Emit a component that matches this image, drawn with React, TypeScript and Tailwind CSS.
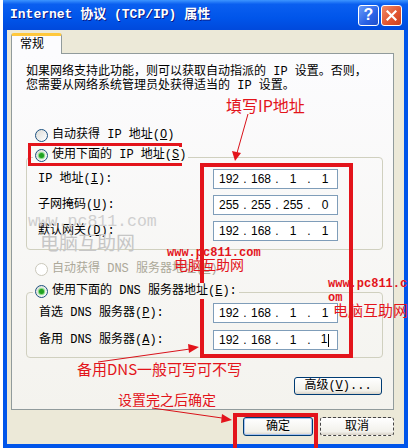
import React from "react";

const UI = "font-['Liberation_Mono','Noto_Sans_CJK_SC',monospace]";
const CJK = "font-['Noto_Sans_CJK_SC',sans-serif]";

function Radio({ checked, disabled }: { checked?: boolean; disabled?: boolean }) {
  return (
    <span
      className={
        disabled
          ? "flex h-[13px] w-[13px] shrink-0 items-center justify-center rounded-full border border-[#CAC8BB] bg-white"
          : "flex h-[13px] w-[13px] shrink-0 items-center justify-center rounded-full border border-[#1C5180] bg-[linear-gradient(135deg,#DCDCD7,#FFFFFF)]"
      }
    >
      {checked && <span className="h-[5px] w-[5px] rounded-full bg-[#21A121] shadow-[0_0_1px_1px_#7BD97A]" />}
    </span>
  );
}

function IpBox({ parts, caret }: { parts: string[]; caret?: boolean }) {
  return (
    <div className="flex h-[20px] w-[125px] items-center border border-[#7F9DB9] bg-white pl-[3px] font-['Liberation_Sans',sans-serif] text-[12px] leading-none text-black">
      {parts.map((p, i) => (
        <React.Fragment key={i}>
          {i > 0 && <span className="w-[8px] text-center">.</span>}
          <span className="w-[24px] text-center">
            {p}
            {caret && i === 3 && <span className="ml-[1px] inline-block h-[13px] w-px bg-black align-middle" />}
          </span>
        </React.Fragment>
      ))}
    </div>
  );
}

function XpButton({ children, w, variant }: { children: React.ReactNode; w: string; variant?: "default" | "dashed" }) {
  const base =
    "flex items-center justify-center rounded-[3px] bg-[linear-gradient(#FFFFFF,#F2F1EB_80%,#D8D2C7)] text-[12px] text-black";
  const border =
    variant === "dashed"
      ? "border border-dashed border-[#444]"
      : variant === "default"
      ? "border border-[#003C74] shadow-[inset_0_0_0_1px_#A9C4F0]"
      : "border border-[#003C74]";
  return <div className={`${base} ${border} ${w}`}>{children}</div>;
}

const ipRows = [
  { label: "IP 地址", key: "I", parts: ["192", "168", "1", "1"] },
  { label: "子网掩码", key: "U", parts: ["255", "255", "255", "0"] },
  { label: "默认网关", key: "D", parts: ["192", "168", "1", "1"] },
];

const dnsRows = [
  { label: "首选 DNS 服务器", key: "P", parts: ["192", "168", "1", "1"] },
  { label: "备用 DNS 服务器", key: "A", parts: ["192", "168", "1", "1"], caret: true },
];

export default function App() {
  return (
    <div className="relative h-[448px] w-[408px] overflow-hidden bg-white pl-[3px]">
      <div className="flex h-full w-[405px] flex-col">
        {/* title bar */}
        <div className="flex h-[30px] shrink-0 items-center bg-[linear-gradient(to_bottom,#3D95FF_0%,#0A5FF0_14%,#0055EA_60%,#0049DC_100%)] pl-[7px] pr-[6px]">
          <span className={`${UI} flex-1 text-[13px] font-bold text-white [text-shadow:1px_1px_#0A1883]`}>
            Internet 协议 (TCP/IP) 属性
          </span>
          <div className="flex gap-[2px]">
            <div className="flex h-[21px] w-[21px] items-center justify-center rounded-[3px] border border-white bg-[linear-gradient(135deg,#6A9CF8,#2A62E6_60%,#1F4FCB)]">
              <span className="font-['Liberation_Sans',sans-serif] text-[16px] font-bold leading-none text-white">?</span>
            </div>
            <div className="flex h-[21px] w-[21px] items-center justify-center rounded-[3px] border border-white bg-[linear-gradient(135deg,#F08A68,#E0532F_60%,#C8401F)]">
              <svg width="11" height="11" viewBox="0 0 11 11">
                <path d="M1.5 1.5 L9.5 9.5 M9.5 1.5 L1.5 9.5" stroke="white" strokeWidth="2.2" strokeLinecap="square" />
              </svg>
            </div>
          </div>
        </div>

        {/* body */}
        <div className={`${UI} flex flex-1 flex-col border-x-4 border-b-4 border-[#0055EA] bg-[#ECE9D8] pl-[4px] pt-[3px] text-[12px] text-black`}>
          <div className="relative z-10 -mb-px flex h-[21px] w-[51px] items-center rounded-t-[3px] border-x border-t-[3px] border-x-[#919B9C] border-t-[#FFC83C] bg-[#FCFCFE] pl-[8px]">
            常规
          </div>

          <div className="flex h-[357px] w-[383px] flex-col border border-[#919B9C] bg-[linear-gradient(#FCFCFE,#F4F3EE)] leading-[14px]">
            <div className="pl-[14px] pt-[11px]">
              <div>如果网络支持此功能，则可以获取自动指派的 IP 设置。否则，</div>
              <div>您需要从网络系统管理员处获得适当的 IP 设置。</div>
            </div>

            <div className="ml-[23px] mt-[34px] flex h-[16px] items-center gap-[4px]">
              <Radio />
              <span>
                自动获得 IP 地址(<u>O</u>)
              </span>
            </div>

            <div className="relative z-10 ml-[21px] mt-[4px] flex h-[16px] w-fit items-center gap-[4px] bg-[#FAFAF8] px-[2px]">
              <Radio checked />
              <span>
                使用下面的 IP 地址(<u>S</u>)
              </span>
            </div>

            <div className="-mt-[6px] ml-[14px] w-[357px] rounded-[4px] border border-[#D0D0BF] pb-[8px] pl-[11px] pt-[11px]">
              <div className="grid grid-cols-[175px_125px] items-center gap-y-[6px]">
                {ipRows.map((r) => (
                  <React.Fragment key={r.key}>
                    <span>
                      {r.label}(<u>{r.key}</u>):
                    </span>
                    <IpBox parts={r.parts} />
                  </React.Fragment>
                ))}
              </div>
            </div>

            <div className="ml-[23px] mt-[11px] flex h-[16px] items-center gap-[4px] text-[#ACA899]">
              <Radio disabled />
              <span>
                自动获得 DNS 服务器地址(<u>B</u>)
              </span>
            </div>

            <div className="relative z-10 ml-[21px] mt-[6px] flex h-[16px] w-fit items-center gap-[4px] bg-[#F7F6F2] px-[2px]">
              <Radio checked />
              <span>
                使用下面的 DNS 服务器地址(<u>E</u>):
              </span>
            </div>

            <div className="-mt-[7px] ml-[14px] w-[357px] rounded-[4px] border border-[#D0D0BF] pb-[7px] pl-[12px] pt-[10px]">
              <div className="grid grid-cols-[174px_125px] items-center gap-y-[7px]">
                {dnsRows.map((r) => (
                  <React.Fragment key={r.key}>
                    <span>
                      {r.label}(<u>{r.key}</u>):
                    </span>
                    <IpBox parts={r.parts} caret={r.caret} />
                  </React.Fragment>
                ))}
              </div>
            </div>

            <div className="mr-[11px] mt-[19px] self-end">
              <XpButton w="w-[88px] h-[18px]">
                高级(<u>V</u>)...
              </XpButton>
            </div>
          </div>

          <div className="mt-[7px] flex justify-end gap-[7px] pr-[10px]">
            <XpButton w="w-[70px] h-[19px]" variant="default">
              确定
            </XpButton>
            <XpButton w="w-[74px] h-[19px]" variant="dashed">
              取消
            </XpButton>
          </div>
        </div>
      </div>

      {/* annotations drawn over the screenshot */}
      <div className="pointer-events-none absolute inset-0">
        <span className={`${UI} absolute left-[28px] top-[214px] text-[16.5px] leading-none text-[#CFCFCF]`}>www.pc811.com</span>
        <span className={`${CJK} absolute left-[40px] top-[232px] text-[19px] leading-none text-[#C6C6C6]`}>电脑互助网</span>

        <div className="absolute left-[28px] top-[143px] h-[23px] w-[154px] border-[3px] border-[#E3141B]" />
        <div className="absolute left-[200px] top-[163px] h-[195px] w-[153px] border-4 border-[#E3141B]" />
        <div className="absolute left-[233px] top-[413px] h-[40px] w-[85px] border-4 border-[#E3141B]" />

        <span className={`${CJK} absolute left-[226px] top-[97px] text-[16px] leading-none text-[#E3141B]`}>填写IP地址</span>
        <span className={`${CJK} absolute left-[77px] top-[361px] text-[15px] leading-none text-[#E3141B]`}>备用DNS一般可写可不写</span>
        <span className={`${CJK} absolute left-[118px] top-[392px] text-[14px] leading-none text-[#E3141B]`}>设置完之后确定</span>

        <span className="absolute left-[167px] top-[247px] font-['Liberation_Mono',monospace] text-[12px] font-bold leading-none text-[#E3141B]">
          www.pc811.com
        </span>
        <span className={`${CJK} absolute left-[174px] top-[257px] text-[14px] leading-none text-[#E3141B]`}>电脑互助网</span>
        <div className="absolute left-[328px] top-[277px] font-['Liberation_Mono',monospace] text-[12px] font-bold leading-[14px] text-[#E3141B]">
          <div>www.pc811.c</div>
          <div>om</div>
        </div>
        <span className={`${CJK} absolute left-[333px] top-[302px] text-[15px] leading-none text-[#E3141B]`}>电脑互助网</span>

        <svg className="absolute inset-0" width="408" height="448" viewBox="0 0 408 448">
          <g stroke="#D9121A" strokeWidth="1" fill="none">
            <line x1="248" y1="114" x2="237" y2="153" />
            <line x1="98" y1="362" x2="190" y2="349" />
            <line x1="152" y1="408" x2="222" y2="418" />
          </g>
          <g fill="#E3141B">
            <polygon points="235,161 232,151 241,153" />
            <polygon points="199,347 188,344 189,353" />
            <polygon points="232,420 222,414 221,423" />
          </g>
        </svg>
      </div>
    </div>
  );
}
